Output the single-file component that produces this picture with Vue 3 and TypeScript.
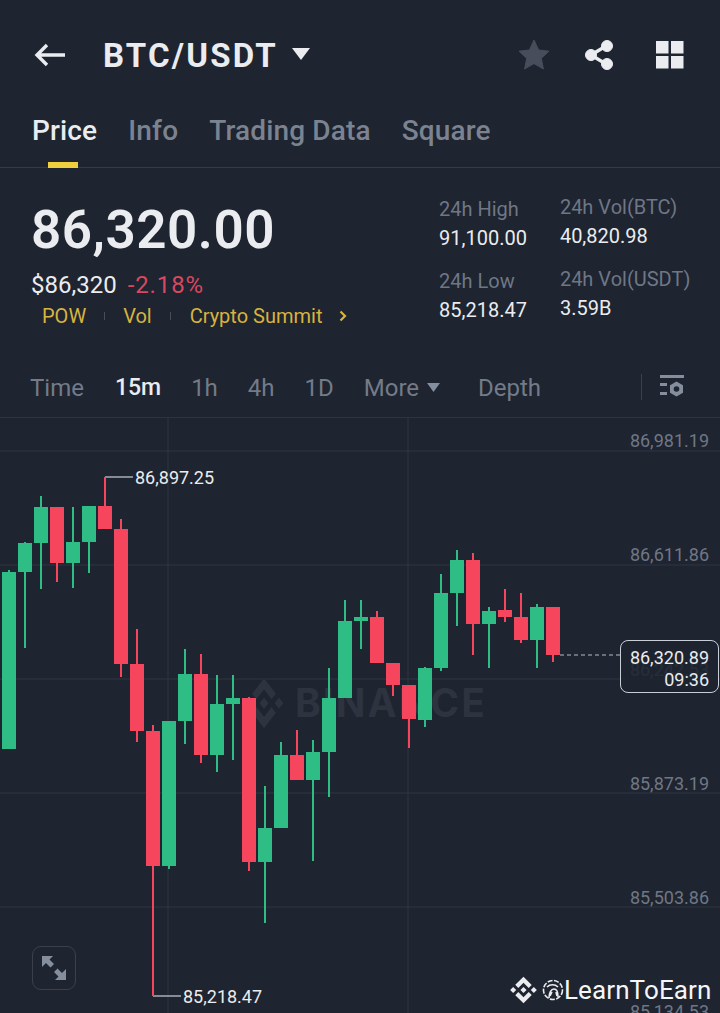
<template>
  <div class="page">
    <header class="topbar">
      <svg class="back" width="32" height="26" viewBox="0 0 32 26" fill="none" stroke="#eaecef" stroke-width="3.4">
        <path d="M31 13H3M13 3 3 13l10 10" />
      </svg>
      <h1 class="pair">BTC/USDT</h1>
      <svg class="caret" width="20" height="14" viewBox="0 0 20 14"><path d="M1 1h18l-9 12z" fill="#eaecef" /></svg>
      <div class="top-actions">
        <svg width="32" height="32" viewBox="0 0 32 32"><path d="M16 1l4.6 10 10.4 1.2-7.700 7.100L25.400 30 16 24.600 6.600 30l2.100-10.700L1 12.200 11.400 11z" fill="#474d5b" stroke="#474d5b" stroke-linejoin="round" /></svg>
        <svg width="30" height="32" viewBox="0 0 30 32" fill="#eaecef" stroke="#eaecef">
          <path d="M22 7 7 16l15 9" fill="none" stroke-width="3.500" />
          <circle cx="23" cy="7" r="5.500" />
          <circle cx="7" cy="16" r="5.500" />
          <circle cx="23" cy="25" r="5.500" />
        </svg>
        <svg class="grid-icon" width="28" height="28" viewBox="0 0 28 28" fill="#eaecef">
          <rect x="0" y="0" width="12.500" height="12.500" />
          <rect x="15" y="0" width="12.500" height="12.500" />
          <rect x="0" y="15" width="12.500" height="12.500" />
          <rect x="15" y="15" width="12.500" height="12.500" />
        </svg>
      </div>
    </header>

    <nav class="tabs">
      <span v-for="(tab, i) in tabs" :key="tab" class="tab" :class="{ active: i === 0 }">{{ tab }}</span>
    </nav>

    <section class="summary">
      <div class="price-box">
        <div class="price">86,320.00</div>
        <div class="sub">
          <span class="usd">$86,320</span>
          <span class="pct">-2.18%</span>
        </div>
        <div class="tags">
          <span>POW</span><i />
          <span>Vol</span><i />
          <span>Crypto Summit</span>
          <svg width="8" height="12" viewBox="0 0 8 12" fill="none" stroke="#d8b33f" stroke-width="2.200"><path d="M1.500 1.500 6 6l-4.500 4.500" /></svg>
        </div>
      </div>
      <div class="stats">
        <div v-for="(col, c) in stats" :key="c" class="stat-col" :class="'col-' + c">
          <div v-for="s in col" :key="s.label" class="stat">
            <div class="stat-label">{{ s.label }}</div>
            <div class="stat-value">{{ s.value }}</div>
          </div>
        </div>
      </div>
    </section>

    <div class="intervals">
      <span v-for="t in intervals" :key="t" class="interval" :class="{ active: t === '15m' }">{{ t }}</span>
      <span class="interval more">More
        <svg width="13" height="9" viewBox="0 0 13 9"><path d="M0 0h13L6.500 9z" fill="#848e9c" /></svg>
      </span>
      <span class="interval depth">Depth</span>
      <i class="divider" />
      <svg class="settings" width="26" height="26" viewBox="0 0 26 26" fill="#848e9c">
        <rect x="1" y="1" width="24" height="3" />
        <rect x="1" y="9" width="7" height="3" />
        <rect x="1" y="18" width="7" height="3" />
        <path d="M17.500 7.500 24 11.200v7.600l-6.500 3.700-6.500-3.700v-7.600z" />
        <circle cx="17.500" cy="15" r="2.800" fill="#1e2430" />
      </svg>
    </div>

    <div class="chart">
      <svg width="720" height="595" viewBox="0 418 720 595">
        <line v-for="y in gridY" :key="y" x1="0" x2="720" :y1="y" :y2="y" class="grid" />
        <line v-for="x in gridX" :key="x" :x1="x" :x2="x" y1="418" y2="1013" class="grid" />

        <g class="watermark">
          <path transform="translate(244.500 678) scale(0.31 0.4)" :d="logo" />
          <text x="295" y="717">BINANCE</text>
        </g>

        <text v-for="l in axis" :key="l.text" x="709" :y="l.y" class="axis">{{ l.text }}</text>

        <g v-for="(k, i) in candles" :key="i" :fill="k[4] ? up : down">
          <rect :x="8 + i * 16" :y="k[2]" width="2" :height="k[3] - k[2]" />
          <rect :x="2 + i * 16" :y="k[0]" width="14" :height="k[1] - k[0]" />
        </g>

        <path d="M105 477h28M153 996h28" class="lead" />
        <path d="M105 477v4M153 992v4" stroke="#f6465d" stroke-width="2" />
        <text x="135" y="484" class="mark">86,897.25</text>
        <text x="183" y="1003" class="mark">85,218.47</text>

        <line x1="560" x2="620" y1="655" y2="655" class="last" />
      </svg>

      <div class="last-tag">
        <div>86,320.89</div>
        <div>09:36</div>
      </div>

      <button class="expand">
        <svg width="28" height="28" viewBox="0 0 28 28" fill="#848e9c">
          <path d="M2 2h11l-3.500 3.500L14 10l-3.500 3.500L6 9l-4 4zM26 26H15l3.500-3.500L14 18l3.500-3.500L22 19l4-4z" />
        </svg>
      </button>

      <div class="credit">
        <svg width="27" height="28" viewBox="0 0 126 126" fill="#eaecef">
          <path :d="logo" />
        </svg>
        <svg class="avatar" width="22" height="22" viewBox="0 0 22 22" fill="none" stroke="#eaecef" stroke-width="1.600">
          <circle cx="11" cy="11" r="9.500" stroke-dasharray="5 1.500" />
          <path d="M5 8c3-3 8-3 11 0M7 19c0-5 2-9 5-9s4 4 4 8M10 13l-2 4M14 13l1 4" />
        </svg>
        <span>LearnToEarn</span>
      </div>
    </div>
  </div>
</template>

<script setup lang="ts">
const tabs = ['Price', 'Info', 'Trading Data', 'Square']
const intervals = ['Time', '15m', '1h', '4h', '1D']
const stats = [
  [
    { label: '24h High', value: '91,100.00' },
    { label: '24h Low', value: '85,218.47' }
  ],
  [
    { label: '24h Vol(BTC)', value: '40,820.98' },
    { label: '24h Vol(USDT)', value: '3.59B' }
  ]
]

const logo =
  'M38.73 53.2 63 28.93l24.28 24.28 14.12-14.12L63 .68 24.61 39.07zM.68 63l14.12-14.12L28.93 63 14.8 77.12zM38.73 72.8 63 97.07l24.28-24.28 14.13 14.11L63 125.32 24.61 86.93zM97.07 63l14.13-14.13L125.32 63l-14.12 14.12zM77.32 63 63 48.67 48.67 63 63 77.32z'

const up = '#2ebd85'
const down = '#f6465d'
const gridY = [451, 565, 679, 793, 907]
const gridX = [168, 408]
const axis = [
  { text: '86,981.19', y: 447 },
  { text: '86,611.86', y: 561 },
  { text: '86,242.53', y: 676 },
  { text: '85,873.19', y: 790 },
  { text: '85,503.86', y: 904 },
  { text: '85,134.53', y: 1018 }
]

// body top, body bottom, wick top, wick bottom, 1 = up
const candles: [number, number, number, number, number][] = [
  [572, 749, 570, 749, 1],
  [543, 572, 542, 648, 1],
  [507, 543, 496, 589, 1],
  [507, 563, 507, 582, 0],
  [542, 563, 507, 588, 1],
  [506, 542, 506, 573, 1],
  [506, 529, 477, 529, 0],
  [529, 664, 519, 677, 0],
  [664, 731, 629, 742, 0],
  [731, 866, 725, 996, 0],
  [721, 866, 721, 869, 1],
  [674, 721, 649, 744, 1],
  [674, 755, 654, 763, 0],
  [704, 755, 675, 772, 1],
  [698, 704, 675, 760, 1],
  [698, 862, 697, 871, 0],
  [828, 862, 786, 923, 1],
  [755, 828, 742, 828, 1],
  [755, 780, 730, 780, 0],
  [752, 780, 740, 861, 1],
  [698, 752, 668, 797, 1],
  [621, 698, 600, 698, 1],
  [617, 621, 600, 649, 1],
  [617, 663, 611, 663, 0],
  [663, 685, 663, 696, 0],
  [685, 719, 685, 748, 0],
  [668, 720, 667, 727, 1],
  [593, 668, 574, 671, 1],
  [560, 593, 550, 626, 1],
  [560, 624, 553, 655, 0],
  [611, 624, 607, 668, 1],
  [610, 617, 589, 622, 0],
  [617, 640, 593, 643, 0],
  [607, 640, 604, 668, 1],
  [607, 655, 607, 662, 0]
]
</script>

<style>
html,
body {
  background: #1e2430;
}
</style>

<style scoped>
.page {
  width: 720px;
  height: 1013px;
  overflow: hidden;
  background: #1e2430;
  color: #eaecef;
  font-family: Roboto, 'Noto Sans', sans-serif;
}

.topbar {
  height: 110px;
  display: flex;
  align-items: center;
  padding: 0 36px 0 34px;
  box-sizing: border-box;
}

.back {
  margin-right: 37px;
}

.pair {
  margin: 0;
  font-size: 33px;
  font-weight: 700;
  letter-spacing: 2.2px;
}

.caret {
  margin-left: 13px;
  margin-bottom: 3px;
}

.top-actions {
  margin-left: auto;
  display: flex;
  align-items: center;
  gap: 34px;
}

.grid-icon {
  margin-left: 8px;
}

.tabs {
  height: 58px;
  display: flex;
  gap: 31px;
  padding-left: 32px;
  box-sizing: border-box;
  border-bottom: 1px solid #343a46;
}

.tab {
  position: relative;
  font-size: 28px;
  line-height: 42px;
  color: #7b8391;
  font-weight: 500;
  letter-spacing: 0.15px;
}

.tab.active {
  color: #eaecef;
}

.tab.active::after {
  content: '';
  position: absolute;
  left: 16px;
  bottom: -1px;
  width: 30px;
  height: 6px;
  background: #f0cf3e;
}

.summary {
  height: 191px;
  display: flex;
  justify-content: space-between;
  padding: 0 0 0 31px;
  box-sizing: border-box;
}

.price {
  margin-top: 31px;
  font-size: 53px;
  line-height: 62px;
  font-weight: 600;
  letter-spacing: 0.5px;
}

.sub {
  display: flex;
  gap: 11px;
  margin-top: 10px;
  font-size: 24px;
  line-height: 28px;
}

.pct {
  color: #d9485f;
  letter-spacing: 0.9px;
}

.tags {
  display: flex;
  align-items: center;
  margin-top: 4px;
  padding-left: 11px;
  font-size: 20px;
  line-height: 26px;
  color: #d8b33f;
}

.tags i {
  width: 1px;
  height: 8px;
  margin: 0 18px;
  background: #474d5b;
}

.tags span:last-of-type {
  margin-left: 1px;
}

.tags svg {
  margin-left: 17px;
}

.stats {
  display: flex;
  gap: 33px;
  width: 281px;
}

.col-0 {
  padding-top: 27px;
}

.col-1 {
  padding-top: 25px;
}

.stat {
  margin-bottom: 16px;
}

.stat-label {
  font-size: 20px;
  line-height: 28px;
  color: #6f7785;
}

.stat-value {
  font-size: 20px;
  line-height: 28px;
  margin-top: 1px;
  margin-bottom: -1px;
  color: #eaecef;
}

.intervals {
  height: 59px;
  display: flex;
  align-items: flex-start;
  gap: 30px;
  padding: 9px 35px 0 30px;
  box-sizing: border-box;
  border-bottom: 1px solid #2c323e;
}

.interval {
  font-size: 24px;
  line-height: 40px;
  color: #737b89;
  white-space: nowrap;
}

.interval.active {
  margin-left: 1px;
  color: #eaecef;
  font-weight: 500;
  font-size: 23px;
}

.more svg {
  margin-left: 2px;
  vertical-align: 4px;
}

.depth {
  margin-left: 8px;
}

.divider {
  margin-left: auto;
  width: 1px;
  height: 26px;
  margin-top: 6px;
  background: #3a404c;
}

.settings {
  margin-left: -13px;
  margin-top: 6px;
}

.chart {
  position: relative;
  height: 595px;
}

.chart > svg {
  display: block;
}

.grid {
  stroke: #2f3541;
  stroke-width: 1;
}

.watermark {
  fill: #2d333f;
}

.watermark text {
  font-family: Inter, sans-serif;
  font-size: 39px;
  font-weight: 700;
  letter-spacing: 2px;
}

.axis {
  text-anchor: end;
  font-size: 18px;
  fill: #6f7785;
}

.mark {
  font-size: 18px;
  fill: #eaecef;
}

.lead {
  stroke: #a9aeb8;
  stroke-width: 1.500;
  fill: none;
}

.last {
  stroke: #b7bdc6;
  stroke-width: 1;
  stroke-dasharray: 4 3;
}

.last-tag {
  position: absolute;
  left: 620px;
  top: 222px;
  width: 99px;
  height: 53px;
  box-sizing: border-box;
  padding: 6px 9px 0 0;
  text-align: right;
  font-size: 18px;
  line-height: 22px;
  border: 1px solid #c9ced6;
  border-radius: 8px;
  background: rgba(30, 36, 48, 0.88);
}

.expand {
  position: absolute;
  left: 32px;
  top: 528px;
  width: 44px;
  height: 44px;
  padding: 0;
  display: flex;
  align-items: center;
  justify-content: center;
  background: transparent;
  border: 1px solid #3a404c;
  border-radius: 9px;
}

.credit {
  position: absolute;
  left: 510px;
  top: 557px;
  display: flex;
  align-items: center;
  height: 30px;
  color: #f5f6f8;
  font-size: 26px;
  letter-spacing: 0.1px;
}

.avatar {
  margin-left: 5px;
}
</style>
